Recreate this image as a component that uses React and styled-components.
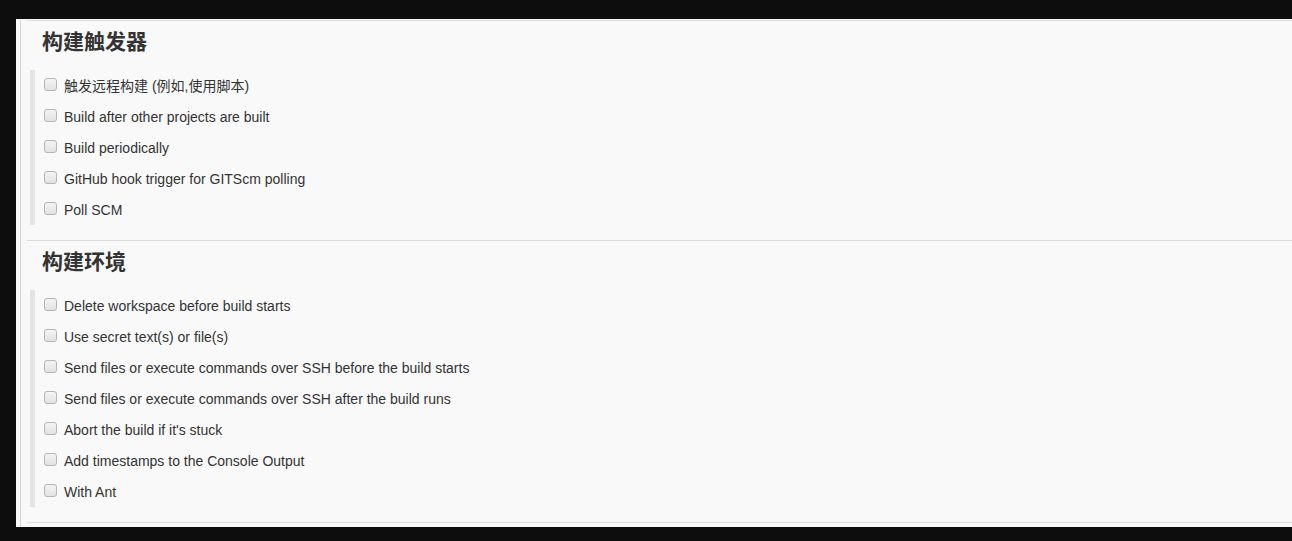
import React from 'react'
import styled, { createGlobalStyle } from 'styled-components';

const GlobalStyle = createGlobalStyle`
  html, body {
    margin: 0;
    padding: 0;
    background: #0d0d0d;
    overflow: hidden;
  }
`;

const Page = styled.div`
  height: 541px;
  padding: 19px 0 0 16px;
  box-sizing: border-box;
`;

const Panel = styled.div`
  background: #f9f9f9;
  height: 508px;
  padding: 1px 0 0 4px;
  box-sizing: border-box;
  font-family: "Liberation Sans", Arial, "Noto Sans CJK SC", sans-serif;
  color: #333;
`;

const Inner = styled.div`
  border-left: 1px solid #d3d3d3;
  height: 100%;
`;

const Section = styled.section`
  margin-left: 6px;
  border-top: 1px solid #dcdcdc;
  padding-top: 4px;
  padding-bottom: 15px;
  &:last-child {
    border-bottom: 1px solid #dcdcdc;
  }
`;

const Title = styled.h2`
  margin: 0 0 15px 15px;
  font-size: 21px;
  line-height: 30px;
  font-weight: 700;
  color: #333;
  font-family: "Noto Sans CJK SC", "Liberation Sans", sans-serif;
`;

const List = styled.div`
  margin-left: 3px;
  border-left: 5px solid #e3e3e3;
  padding-left: 9px;
`;

const Row = styled.label`
  display: flex;
  align-items: center;
  height: 31px;
  font-size: 14px;
  cursor: pointer;
`;

const Box = styled.span`
  width: 11px;
  height: 11px;
  border: 1px solid #b5b5b5;
  border-radius: 3px;
  background: linear-gradient(#f4f4f4, #e2e2e2);
  margin: -3px 7px 0 0;
  flex-shrink: 0;
`;

const Label = styled.span`
  line-height: 16px;
`;

const sections = [
  {
    title: '构建触发器',
    items: [
      '触发远程构建 (例如,使用脚本)',
      'Build after other projects are built',
      'Build periodically',
      'GitHub hook trigger for GITScm polling',
      'Poll SCM',
    ],
  },
  {
    title: '构建环境',
    items: [
      'Delete workspace before build starts',
      'Use secret text(s) or file(s)',
      'Send files or execute commands over SSH before the build starts',
      'Send files or execute commands over SSH after the build runs',
      "Abort the build if it's stuck",
      'Add timestamps to the Console Output',
      'With Ant',
    ],
  },
];

const App = () => {
  return (
    <Page>
      <GlobalStyle />
      <Panel>
        <Inner>
          {sections.map((s) => (
            <Section key={s.title}>
              <Title>{s.title}</Title>
              <List>
                {s.items.map((item) => (
                  <Row key={item}>
                    <Box />
                    <Label>{item}</Label>
                  </Row>
                ))}
              </List>
            </Section>
          ))}
        </Inner>
      </Panel>
    </Page>
  );
}

export default App
